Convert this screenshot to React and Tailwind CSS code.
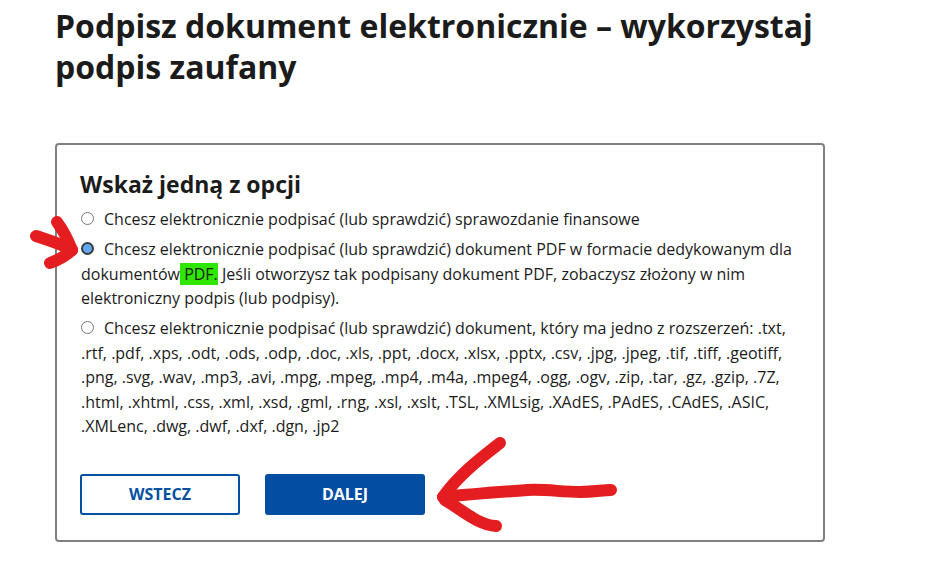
const font = { fontFamily: '"Open Sans", "Noto Sans", sans-serif' };

const Radio = ({ checked }) => (
  <span className="inline-block align-middle mr-[10px] relative top-[-2px]">
    {checked ? (
      <span className="block w-[13px] h-[13px] rounded-full bg-[#62a8ee] border-[2px] border-[#3b3b3b]" />
    ) : (
      <span className="block w-[13px] h-[13px] rounded-full bg-white border border-[#767676]" />
    )}
  </span>
);

const Option = ({ checked, children }) => (
  <div className="text-[16px] leading-[24.5px] text-[#1b1b1b] pl-px">
    <Radio checked={checked} />
    {children}
  </div>
);

const Arrows = () => (
  <svg className="absolute left-0 top-0 pointer-events-none" width="945" height="585" viewBox="0 0 945 585">
    <g fill="none" stroke="#e41e20" strokeWidth="12" strokeLinecap="round" strokeLinejoin="round">
      {/* arrow pointing at the PDF option */}
      <path d="M36 236 C48 240 62 244 72 250" />
      <path d="M57 222 C63 230 68 240 72 250" />
      <path d="M72 250 C66 256 58 260 50 263" />
      {/* arrow pointing at DALEJ */}
      <path d="M500 443 C478 460 458 476 443 497" />
      <path d="M443 497 C470 494 500 492 527 490 C548 489 560 492 580 492 C595 492 602 490 611 490" />
      <path d="M445 500 C462 510 478 525 496 526" />
    </g>
  </svg>
);

export default function App() {
  return (
    <div className="relative w-[945px] h-[585px] bg-white overflow-hidden" style={font}>
      <div className="pl-[55px] pt-[5px]">
        <h1 className="text-[32px] leading-[41px] font-bold text-[#1b1b1b] w-[800px]">
          Podpisz dokument elektronicznie – wykorzystaj podpis zaufany
        </h1>

        <div className="mt-[56px] w-[770px] border-2 border-[#808080] rounded-[4px] px-[23px] pt-[24px] pb-[25px]">
          <h2 className="text-[23px] leading-[31px] font-bold text-[#1b1b1b] mb-[7px]">Wskaż jedną z opcji</h2>

          <div className="flex flex-col gap-[5.5px]">
            <Option>Chcesz elektronicznie podpisać (lub sprawdzić) sprawozdanie finansowe</Option>
            <Option checked>
              Chcesz elektronicznie podpisać (lub sprawdzić) dokument PDF w formacie dedykowanym dla dokumentów
              <span className="bg-[#2ee600]"> PDF.</span> Jeśli otworzysz tak podpisany dokument PDF, zobaczysz złożony w nim
              elektroniczny podpis (lub podpisy).
            </Option>
            <Option>
              Chcesz elektronicznie podpisać (lub sprawdzić) dokument, który ma jedno z rozszerzeń: .txt, .rtf, .pdf,
              .xps, .odt, .ods, .odp, .doc, .xls, .ppt, .docx, .xlsx, .pptx, .csv, .jpg, .jpeg, .tif, .tiff, .geotiff,
              .png, .svg, .wav, .mp3, .avi, .mpg, .mpeg, .mp4, .m4a, .mpeg4, .ogg, .ogv, .zip, .tar, .gz, .gzip, .7Z,
              .html, .xhtml, .css, .xml, .xsd, .gml, .rng, .xsl, .xslt, .TSL, .XMLsig, .XAdES, .PAdES, .CAdES, .ASIC,
              .XMLenc, .dwg, .dwf, .dxf, .dgn, .jp2
            </Option>
          </div>

          <div className="flex gap-[25px] mt-[35px]">
            <button className="w-[160px] h-[41px] rounded-[3px] border-2 border-[#0350a3] bg-white text-[#0350a3] text-[16px] font-bold uppercase">
              Wstecz
            </button>
            <button className="w-[160px] h-[41px] rounded-[3px] bg-[#034ea2] text-white text-[16px] font-bold uppercase">
              Dalej
            </button>
          </div>
        </div>
      </div>
      <Arrows />
    </div>
  );
}
